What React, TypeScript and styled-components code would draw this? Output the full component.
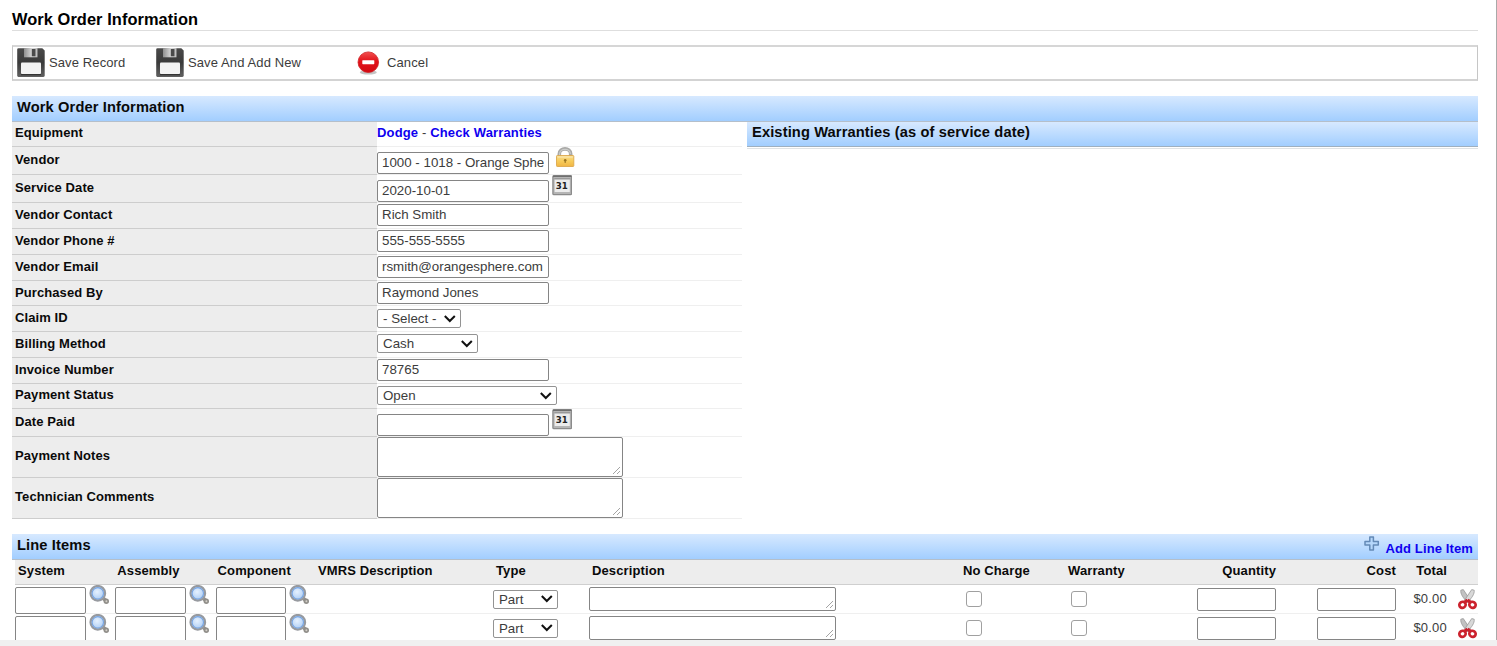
import React from 'react';
import styled, { createGlobalStyle, css } from 'styled-components';

const GlobalStyle = createGlobalStyle`
  *, *::before, *::after { box-sizing: border-box; }
  html, body { margin: 0; background: #fff; overflow: hidden; }
  body, input, select, textarea {
    font-family: "Liberation Sans", Arial, sans-serif;
    font-size: 13.33px;
    color: #3c3c3c;
  }
`;

const Page = styled.div`
  width: 1497px;
  height: 646px;
  overflow: hidden;
  display: flex;
  flex-direction: column;
  background: #fff;
`;

const Frame = styled.main`
  height: 640px;
  flex: none;
  overflow: hidden;
  padding: 0 18px 0 12px;
  border-right: 1px solid #a9a9a9;
`;

const BottomBar = styled.div`
  flex: 1;
  background: #f0f0f0;
`;

const Title = styled.h1`
  margin: 0;
  height: 31px;
  padding-top: 10px;
  border-bottom: 1px solid #dedede;
  font-size: 16.4px;
  line-height: 19px;
  letter-spacing: 0.07px;
  color: #000;
`;

const Toolbar = styled.div`
  display: flex;
  align-items: center;
  margin-top: 14px;
  height: 36px;
  padding-left: 4px;
  border: 1px solid #c6c6c6;
  border-top: 2px solid #d6d6d6;
  border-bottom: 2px solid #d3d3d3;
`;

const ToolButton = styled.div<{ $width: number; $gap: number }>`
  display: flex;
  align-items: center;
  width: ${p => p.$width}px;
  gap: ${p => p.$gap}px;
  font-size: 13px;
  letter-spacing: 0.11px;
  white-space: nowrap;
  span { padding-bottom: 2px; }
`;

const barFill = css`
  background: linear-gradient(#d7e9ff, #a2ceff);
  color: #0a0a0a;
  font-weight: bold;
  font-size: 14.67px;
  letter-spacing: 0.12px;
`;

const SectionBar = styled.div<{ $top: number; $h: number }>`
  ${barFill}
  display: flex;
  justify-content: space-between;
  margin-top: ${p => p.$top}px;
  height: ${p => p.$h}px;
  padding: 0 5px;
  line-height: 22px;
  border-bottom: 1px solid #b5bfca;
`;

const Columns = styled.div`
  display: flex;
  gap: 5px;
  height: 397px;
`;

const FieldTable = styled.div`
  width: 730px;
`;

const FieldRow = styled.div<{ $h: number }>`
  display: flex;
  height: ${p => p.$h}px;
`;

const FieldLabel = styled.label<{ $lift: number }>`
  display: flex;
  align-items: center;
  width: 365px;
  padding: 0 3px ${p => p.$lift}px;
  background: #ededed;
  border-bottom: 1px solid #cdcdcd;
  color: #0a0a0a;
  font-size: 13px;
  font-weight: bold;
  letter-spacing: 0.09px;
`;

const FieldValue = styled.div<{ $top: number }>`
  display: flex;
  align-items: flex-start;
  flex: 1;
  padding-top: ${p => p.$top}px;
  border-bottom: 1px solid #efefef;
`;

const EquipmentLinks = styled.div`
  font-size: 13px;
  line-height: 15px;
  letter-spacing: 0.15px;
  white-space: nowrap;
`;

const Link = styled.a`
  color: #0f00ef;
  font-weight: bold;
`;

const control = css`
  margin: 0;
  border: 1px solid #858585;
  border-radius: 2px;
  background: #fff;
  outline: none;
`;

const TextInput = styled.input<{ $w: number; $h: number }>`
  ${control}
  width: ${p => p.$w}px;
  height: ${p => p.$h}px;
  padding: 0 4px 2px;
  flex: none;
`;

const AreaBox = styled.div<{ $w: number; $h: number }>`
  position: relative;
  flex: none;
  width: ${p => p.$w}px;
  height: ${p => p.$h}px;
  svg { position: absolute; right: 2px; bottom: 2px; }
`;

const NativeArea = styled.textarea`
  ${control}
  display: block;
  width: 100%;
  height: 100%;
  resize: none;
`;

const SelectBox = styled.div<{ $w: number }>`
  position: relative;
  width: ${p => p.$w}px;
  height: 19px;
  svg { position: absolute; right: 5px; top: 5.5px; }
`;

const NativeSelect = styled.select`
  ${control}
  border-color: #939393;
  appearance: none;
  display: block;
  width: 100%;
  height: 100%;
  padding: 0 5px;
`;

const IconSlot = styled.span<{ $left: number; $up?: number }>`
  display: block;
  height: 20px;
  margin-left: ${p => p.$left}px;
  margin-top: ${p => -(p.$up ?? 0)}px;
  svg { display: block; }
`;

const Warranties = styled.section`
  flex: 1;
  height: 27px;
  border-bottom: 1px solid #dfe3e5;
`;

const WarrantyBar = styled.div`
  ${barFill}
  height: 25px;
  padding: 0 5px;
  line-height: 21px;
  border-bottom: 1px solid #9fb0bf;
`;

const AddLink = styled.a`
  display: flex;
  gap: 5px;
  color: #0f00ef;
  font-size: 13px;
  letter-spacing: 0.12px;
  line-height: 30px;
  svg { margin-top: 2px; }
`;

const lineGrid = css`
  display: grid;
  grid-template-columns: 100.3px 100.3px 100.4px 177px 96px 371px 105px 122px 89px 120px 51px 31px;
  margin-left: 3px;
`;

const LineHead = styled.div`
  ${lineGrid}
  height: 25px;
  line-height: 22px;
  background: #ededed;
  border-bottom: 1px solid #cfcfcf;
  color: #0a0a0a;
  font-weight: bold;
  font-size: 13px;
  letter-spacing: 0.12px;
`;

const HeadCell = styled.span<{ $left?: number; $right?: boolean }>`
  padding-left: ${p => p.$left ?? 3}px;
  text-align: ${p => (p.$right ? 'right' : 'left')};
  white-space: nowrap;
`;

const LineRow = styled.div`
  ${lineGrid}
  height: 29px;
  border-bottom: 1px solid #efefef;
`;

const Cell = styled.div<{ $top: number; $left?: number; $end?: boolean }>`
  display: flex;
  align-items: flex-start;
  justify-content: ${p => (p.$end ? 'flex-end' : 'flex-start')};
  padding: ${p => p.$top}px 0 0 ${p => p.$left ?? 0}px;
`;

const Check = styled.input`
  appearance: none;
  width: 16px;
  height: 16px;
  margin: 0;
  border: 1px solid #a0a0a0;
  border-radius: 3px;
  background: #fff;
`;

const Amount = styled.span`
  font-size: 13px;
  line-height: 15px;
  letter-spacing: 0.2px;
`;

const Chevron = () => (
  <svg width="12" height="8" viewBox="0 0 12 8" fill="none">
    <path d="M.8 1l5 5 5-5" stroke="#111" strokeWidth="2" />
  </svg>
);

const Grip = () => (
  <svg width="9" height="9" viewBox="0 0 9 9">
    <path d="M1 8L8 1M5 8l3-3" stroke="#9a9a9a" strokeWidth=".9" />
  </svg>
);

const Floppy = () => (
  <svg width="28" height="30" viewBox="0 0 28 30">
    <defs>
      <linearGradient id="disk" x1="0" y1="0" x2="0" y2="1">
        <stop offset="0" stopColor="#4a4a4a" />
        <stop offset=".5" stopColor="#3a3a3a" />
        <stop offset="1" stopColor="#606060" />
      </linearGradient>
      <linearGradient id="shutter">
        <stop offset="0" stopColor="#8f8f8f" />
        <stop offset=".6" stopColor="#dadada" />
        <stop offset="1" stopColor="#bcbcbc" />
      </linearGradient>
    </defs>
    <path d="M1.500 .2h23.800l2.400 2.400v25q0 1.300-1.300 1.300h-25Q.2 28.900 .2 27.600V1.500Q.2 .2 1.500 .2z" fill="url(#disk)" />
    <path d="M7 0h13.500v9.300H7z" fill="url(#shutter)" />
    <path d="M14.800 1h3.700v7.300h-3.700z" fill="#4a4a4a" />
    <rect x="4" y="14.500" width="20" height="11.500" rx="1" fill="#f3f3f3" />
    <path d="M4 26.700h20" stroke="#2c2c2c" />
  </svg>
);

const CancelIcon = () => (
  <svg width="24" height="26" viewBox="0 0 24 26">
    <defs>
      <linearGradient id="stop" x1="0" y1="0" x2="0" y2="1">
        <stop offset="0" stopColor="#f0504f" />
        <stop offset=".45" stopColor="#e3121a" />
        <stop offset="1" stopColor="#d20a12" />
      </linearGradient>
    </defs>
    <ellipse cx="12.300" cy="22.300" rx="8.500" ry="2.300" fill="#c4c4c4" />
    <circle cx="12.300" cy="12.200" r="10.300" fill="url(#stop)" stroke="#cf2226" strokeWidth=".8" />
    <rect x="6.300" y="10.200" width="12" height="4" rx=".6" fill="#fff" />
  </svg>
);

const Lock = () => (
  <svg width="19" height="21" viewBox="0 0 19 21">
    <defs>
      <linearGradient id="lock" x1="0" y1="0" x2="0" y2="1">
        <stop offset="0" stopColor="#f6dc92" />
        <stop offset=".5" stopColor="#f8cc5a" />
        <stop offset="1" stopColor="#efb545" />
      </linearGradient>
    </defs>
    <path d="M3.300 10V7C3.300 .2 14.700 .2 14.700 7V10" fill="none" stroke="#a9a9a7" strokeWidth="3.600" />
    <path d="M3.600 9V7C3.600 .9 14.400 .9 14.400 7" fill="none" stroke="#cbccca" strokeWidth="1.200" />
    <rect x=".5" y="8.500" width="17.300" height="11" rx=".8" fill="url(#lock)" stroke="#dca84c" strokeWidth=".9" />
    <path d="M1.500 10h15.300" stroke="#fbe9b4" />
    <circle cx="9.200" cy="13.300" r="1.300" fill="#9a7423" />
    <path d="M9.200 13v3" stroke="#9a7423" strokeWidth="1.100" />
  </svg>
);

const CalendarIcon = () => (
  <svg width="20" height="21" viewBox="0 0 20 21">
    <rect x=".9" y=".7" width="18.600" height="19" rx="1" fill="#b5b5b5" stroke="#8b8b8b" strokeWidth="1.300" />
    <path d="M1 1.300h18.400" stroke="#6f6f6f" strokeWidth="1.400" />
    <rect x="2.600" y="4.300" width="15.200" height="12.700" fill="#ececec" />
    <path d="M2.300 3.800h16" stroke="#8e8e8e" />
    <text x="9.700" y="13.700" textAnchor="middle" textLength="12" lengthAdjust="spacingAndGlyphs" fontFamily="DejaVu Sans, sans-serif" fontWeight="bold" fontSize="8.300" fill="#222">31</text>
  </svg>
);

const Magnifier = () => (
  <svg width="21" height="20" viewBox="0 0 21 20">
    <defs>
      <radialGradient id="lens" cx=".45" cy=".4" r=".6">
        <stop offset="0" stopColor="#e5f1ff" />
        <stop offset="1" stopColor="#a9caf2" />
      </radialGradient>
    </defs>
    <path d="M14 13.200l3.400 3" stroke="#94918c" strokeWidth="3.600" />
    <circle cx="17.300" cy="16.300" r="2.700" fill="#918f8a" />
    <circle cx="17.400" cy="16.300" r="1" fill="#d4d0c8" />
    <circle cx="8.800" cy="8.300" r="7.300" fill="url(#lens)" stroke="#979a9f" strokeWidth="2.200" />
    <circle cx="8.800" cy="8.300" r="5.700" fill="none" stroke="#78a5e2" strokeWidth="1.100" />
  </svg>
);

const PlusIcon = () => (
  <svg width="16" height="16" viewBox="0 0 16 16">
    <path d="M5.800 1h3.600v4.600h4.900v3.500H9.400v4.900H5.800V9.100H1V5.600h4.800z" fill="#b6d7fb" stroke="#648ab7" strokeWidth="1.500" strokeLinejoin="round" />
  </svg>
);

const Scissors = () => (
  <svg width="19" height="21" viewBox="0 0 19 21" fill="none">
    <path d="M2.800 1.200L5.300 .6l7 10.500-2.800 2C5.500 9.500 2.300 5 2.800 1.200z" fill="#c2c2c2" stroke="#989898" strokeWidth=".8" />
    <path d="M16.200 1.200L13.700 .6 6.700 11l2.800 2C13.500 9.500 16.700 5 16.200 1.200z" fill="#d8d8d8" stroke="#989898" strokeWidth=".8" />
    <path d="M9.500 11L6.500 13.500M9.500 11l3 2.500" stroke="#c8202c" strokeWidth="3.400" />
    <ellipse cx="4.500" cy="15.800" rx="3.200" ry="3" transform="rotate(-35 4.500 15.800)" stroke="#cc222d" strokeWidth="2.700" />
    <ellipse cx="14.500" cy="15.800" rx="3.200" ry="3" transform="rotate(35 14.500 15.800)" stroke="#cc222d" strokeWidth="2.700" />
  </svg>
);

const TextArea = ({ w, h }: { w: number; h: number }) => (
  <AreaBox $w={w} $h={h}>
    <NativeArea />
    <Grip />
  </AreaBox>
);

const Select = ({ w, value }: { w: number; value: string }) => (
  <SelectBox $w={w}>
    <NativeSelect defaultValue={value}>
      <option>{value}</option>
    </NativeSelect>
    <Chevron />
  </SelectBox>
);

type FieldProps = { label: string; h: number; top: number; lift?: number; children: React.ReactNode };

const Field = ({ label, h, top, lift = 2, children }: FieldProps) => (
  <FieldRow $h={h}>
    <FieldLabel $lift={lift}>{label}</FieldLabel>
    <FieldValue $top={top}>{children}</FieldValue>
  </FieldRow>
);

const Input = ({ value = '' }: { value?: string }) => <TextInput $w={172} $h={22} defaultValue={value} />;

const Lookup = () => (
  <Cell $top={2}>
    <TextInput $w={70.5} $h={26.5} />
    <IconSlot $left={3} $up={2}><Magnifier /></IconSlot>
  </Cell>
);

const LineItem = () => (
  <LineRow>
    <Lookup />
    <Lookup />
    <Lookup />
    <Cell $top={0} />
    <Cell $top={4.5}><Select w={65} value="Part" /></Cell>
    <Cell $top={2}><TextArea w={247} h={24} /></Cell>
    <Cell $top={6} $left={6}><Check type="checkbox" /></Cell>
    <Cell $top={6} $left={6}><Check type="checkbox" /></Cell>
    <Cell $top={3} $end><TextInput $w={79} $h={23} /></Cell>
    <Cell $top={3} $end><TextInput $w={79} $h={23} /></Cell>
    <Cell $top={6} $end><Amount>$0.00</Amount></Cell>
    <Cell $top={4} $left={11}><Scissors /></Cell>
  </LineRow>
);

export default function App() {
  return (
    <Page>
      <GlobalStyle />
      <Frame>
        <Title>Work Order Information</Title>
        <Toolbar>
          <ToolButton $width={139} $gap={4}><Floppy /><span>Save Record</span></ToolButton>
          <ToolButton $width={200} $gap={4}><Floppy /><span>Save And Add New</span></ToolButton>
          <ToolButton $width={100} $gap={7}><CancelIcon /><span>Cancel</span></ToolButton>
        </Toolbar>

        <SectionBar $top={15} $h={26}>Work Order Information</SectionBar>
        <Columns>
          <FieldTable>
            <Field label="Equipment" h={25} top={3} lift={3}>
              <EquipmentLinks><Link>Dodge</Link> - <Link>Check Warranties</Link></EquipmentLinks>
            </Field>
            <Field label="Vendor" h={28} top={5}>
              <Input value="1000 - 1018 - Orange Sphere" />
              <IconSlot $left={7} $up={5}><Lock /></IconSlot>
            </Field>
            <Field label="Service Date" h={28} top={5}>
              <Input value="2020-10-01" />
              <IconSlot $left={3} $up={5}><CalendarIcon /></IconSlot>
            </Field>
            <Field label="Vendor Contact" h={26} top={1}><Input value="Rich Smith" /></Field>
            <Field label="Vendor Phone #" h={26} top={1}><Input value="555-555-5555" /></Field>
            <Field label="Vendor Email" h={26} top={1}><Input value="rsmith@orangesphere.com" /></Field>
            <Field label="Purchased By" h={25} top={1}><Input value="Raymond Jones" /></Field>
            <Field label="Claim ID" h={26} top={3}><Select w={84} value="- Select -" /></Field>
            <Field label="Billing Method" h={26} top={2}><Select w={101} value="Cash" /></Field>
            <Field label="Invoice Number" h={26} top={1}><Input value="78765" /></Field>
            <Field label="Payment Status" h={25} top={2} lift={3}><Select w={180} value="Open" /></Field>
            <Field label="Date Paid" h={28} top={5}>
              <Input />
              <IconSlot $left={3} $up={5}><CalendarIcon /></IconSlot>
            </Field>
            <Field label="Payment Notes" h={41} top={0} lift={3}><TextArea w={246} h={40} /></Field>
            <Field label="Technician Comments" h={41} top={0} lift={3}><TextArea w={246} h={40} /></Field>
          </FieldTable>
          <Warranties>
            <WarrantyBar>Existing Warranties (as of service date)</WarrantyBar>
          </Warranties>
        </Columns>

        <SectionBar $top={15} $h={26}>
          Line Items
          <AddLink><PlusIcon />Add Line Item</AddLink>
        </SectionBar>
        <LineHead>
          <HeadCell>System</HeadCell>
          <HeadCell $left={2}>Assembly</HeadCell>
          <HeadCell $left={2}>Component</HeadCell>
          <HeadCell $left={2}>VMRS Description</HeadCell>
          <HeadCell>Type</HeadCell>
          <HeadCell>Description</HeadCell>
          <HeadCell>No Charge</HeadCell>
          <HeadCell>Warranty</HeadCell>
          <HeadCell $right>Quantity</HeadCell>
          <HeadCell $right>Cost</HeadCell>
          <HeadCell $right>Total</HeadCell>
          <HeadCell />
        </LineHead>
        <LineItem />
        <LineItem />
      </Frame>
      <BottomBar />
    </Page>
  );
}
